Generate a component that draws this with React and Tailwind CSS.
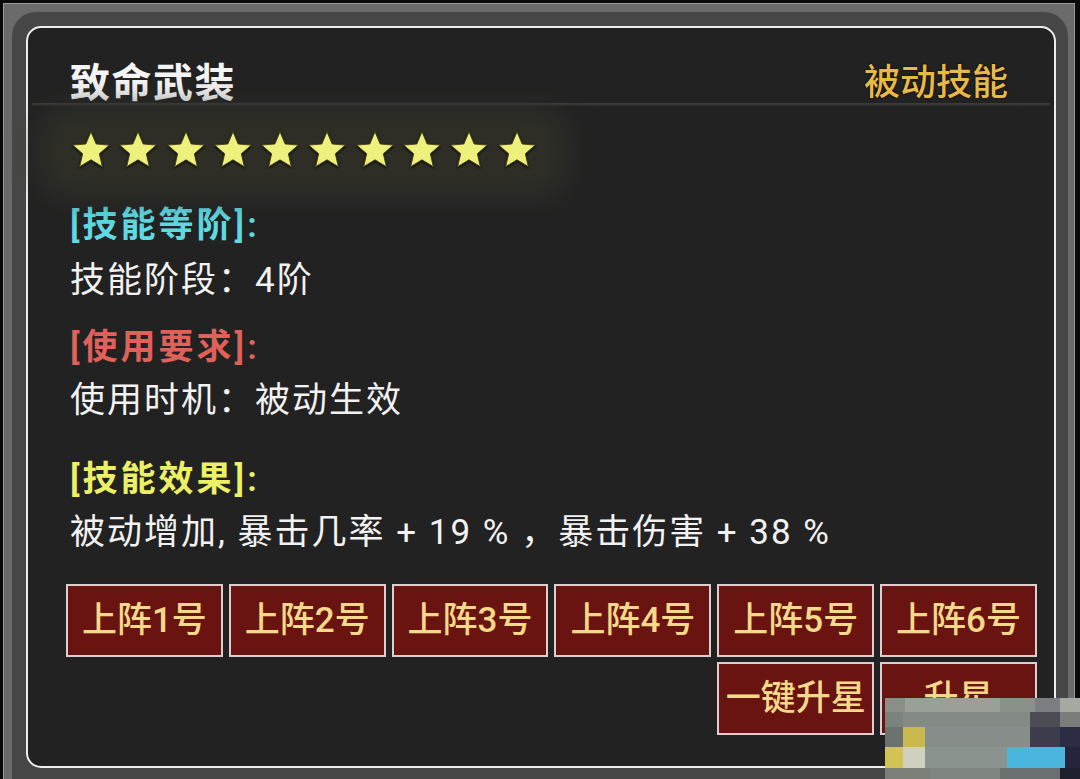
import React from "react";

const FONT = "font-['Roboto','Noto_Sans_CJK_SC','Noto_Sans',sans-serif]";

function Star() {
  return (
    <svg viewBox="0 0 24 24" className="h-[42px] w-[42px] drop-shadow-[0_1px_1px_rgba(0,0,0,0.85)]">
      <path
        d="M12 1.6L14.94 8.55L22.46 9.2L16.76 14.15L18.47 21.5L12 17.6L5.53 21.5L7.24 14.15L1.54 9.2L9.06 8.55Z"
        fill="#edf07c"
        stroke="#45451a"
        strokeWidth="0.55"
        strokeLinejoin="round"
      />
    </svg>
  );
}

const slots = ["上阵1号", "上阵2号", "上阵3号", "上阵4号", "上阵5号", "上阵6号"];

// pixelated cover over the lower right corner
const mosaic = [
  { h: 14, cells: [[20, "#8a9088"], [95, "#9aa098"], [35, "#8a908a"], [25, "#7a7e80"], [20, "#a4aaa2"]] },
  { h: 15, cells: [[18, "#7c827c"], [127, "#848a84"], [30, "#4c4c56"], [20, "#7a7e7a"]] },
  { h: 20, cells: [[18, "#6c726e"], [22, "#c9b94e"], [105, "#878d88"], [30, "#3c3c4c"], [20, "#2c2c44"]] },
  { h: 21, cells: [[18, "#d2c454"], [22, "#cfd0c0"], [82, "#8b938f"], [58, "#4ab6de"], [15, "#24243c"]] },
  { h: 11, cells: [[45, "#7a8078"], [70, "#7e847e"], [60, "#6a7070"], [20, "#1e2030"]] },
];

const btn =
  "flex items-center justify-center border-2 border-[#dccfcf] bg-[#6a1411] text-[35px] font-medium leading-none text-[#f5d98a]";

export default function App() {
  return (
    <div className={`relative h-[779px] w-[1080px] overflow-hidden bg-[#0a0a0a] pl-[3px] pr-[5px] pt-[3px] ${FONT}`}>
      <div className="h-[790px] border-l border-r border-t border-[#9a9a9a] bg-[#6b6b6b] pl-[8px] pr-[6px] pt-[8px]">
        <div className="h-full rounded-t-[24px] bg-[#474747] pl-[14px] pr-[12px] pt-[14px]">
          <section className="flex h-[742px] flex-col rounded-[15px] border-2 border-[#ededed] bg-[#222222]">
            {/* header */}
            <div className="flex h-[75px] items-end justify-between pl-[42px] pr-[46px]">
              <h1 className="text-[40px] font-bold leading-[38px] tracking-[1.5px] text-[#f5f5f5]">致命武装</h1>
              <span className="mb-[1px] text-[36px] font-medium leading-[38px] text-[#e9b948] [text-shadow:0_0_2px_#000,0_0_1px_#000]">
                被动技能
              </span>
            </div>
            <div className="mx-[4px] h-[3px] bg-gradient-to-b from-[#3f3f3f] to-[#2a2a2a]" />

            {/* stars */}
            <div className="relative h-[95px]">
              <div className="absolute left-[10px] top-[0px] h-[92px] w-[530px] rounded-[30px] bg-[#34342a] opacity-70 blur-[14px]" />
              <div className="relative flex gap-[5.3px] pl-[42px] pt-[23px]">
                {Array.from({ length: 10 }).map((_, i) => (
                  <Star key={i} />
                ))}
              </div>
            </div>

            {/* details */}
            <div className="-mt-[1px] pl-[42px] text-[#f2f2f2]">
              <div className="text-[35px] font-semibold leading-[52px] tracking-[3px] text-[#5fd9e2]">[技能等阶]:</div>
              <div className="mt-[3px] text-[35px] leading-[52px] tracking-[2px]">技能阶段：4阶</div>
              <div className="mt-[15px] text-[35px] font-semibold leading-[52px] tracking-[3px] text-[#e0605a]">[使用要求]:</div>
              <div className="mt-[1px] text-[35px] leading-[52px] tracking-[2px]">使用时机：被动生效</div>
              <div className="mt-[27px] text-[35px] font-semibold leading-[52px] tracking-[3px] text-[#ecf064]">[技能效果]:</div>
              <div className="mt-[1px] text-[35px] leading-[52px] tracking-[2px]">被动增加, 暴击几率 + 19 % ，暴击伤害 + 38 %</div>
            </div>

            {/* actions */}
            <div className="ml-[38px] mr-[17px] mt-[25px] grid grid-cols-6 auto-rows-[73px] gap-x-[6px] gap-y-[5px]">
              {slots.map((s) => (
                <button key={s} className={btn}>
                  {s}
                </button>
              ))}
              <button className={`col-start-5 ${btn}`}>一键升星</button>
              <button className={btn}>升星</button>
            </div>
          </section>
        </div>
      </div>

      <div className="absolute left-[885px] top-[698px] w-[195px]">
        {mosaic.map((row, r) => (
          <div key={r} className="flex" style={{ height: row.h }}>
            {row.cells.map(([w, c], i) => (
              <div key={i} style={{ width: w, background: c }} />
            ))}
          </div>
        ))}
      </div>
    </div>
  );
}
